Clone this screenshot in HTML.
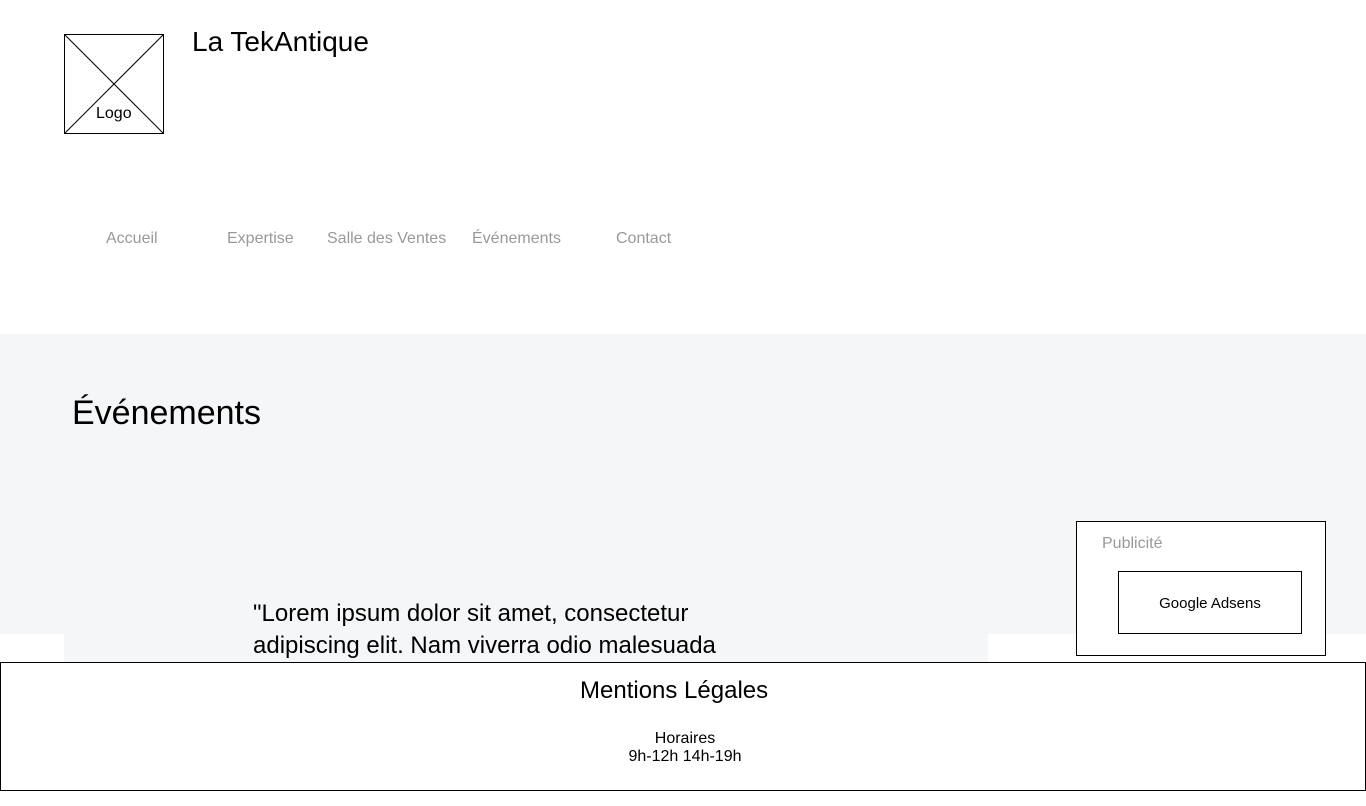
<!DOCTYPE html>
<html><head><meta charset="utf-8"><style>
body{margin:0;width:1366px;height:806px;position:relative;background:#fff;font-family:"Liberation Sans",Arial,sans-serif;overflow:hidden}
.a{position:absolute;white-space:nowrap}
.nav{color:#999;font-size:16px;top:230px}
</style></head><body>
<svg class="a" style="left:64px;top:34px" width="100" height="100"><rect x="0.5" y="0.5" width="99" height="99" fill="#fff" stroke="#000"/><line x1="0" y1="0" x2="100" y2="100" stroke="#000"/><line x1="100" y1="0" x2="0" y2="100" stroke="#000"/></svg>
<div class="a" style="left:96px;top:105px;font-size:16px">Logo</div>
<div class="a" style="left:192px;top:26px;font-size:28px">La TekAntique</div>
<div class="a nav" style="left:106px">Accueil</div>
<div class="a nav" style="left:227px">Expertise</div>
<div class="a nav" style="left:327px">Salle des Ventes</div>
<div class="a nav" style="left:472px">Événements</div>
<div class="a nav" style="left:616px">Contact</div>
<div class="a" style="left:0;top:334px;width:1366px;height:300px;background:#f5f6f8"></div>
<div class="a" style="left:64px;top:634px;width:924px;height:28px;background:#f5f6f8"></div>
<div class="a" style="left:72px;top:394px;font-size:34px">Événements</div>
<div class="a" style="left:253px;top:598px;font-size:24px;line-height:32px">"Lorem ipsum dolor sit amet, consectetur<br>adipiscing elit. Nam viverra odio malesuada</div>
<div class="a" style="left:1076px;top:521px;width:248px;height:133px;border:1px solid #000;background:#fff"></div>
<div class="a" style="left:1102px;top:535px;font-size:16px;color:#999">Publicité</div>
<div class="a" style="left:1118px;top:571px;width:182px;height:61px;border:1px solid #000;text-align:center;line-height:63px;font-size:15px">Google Adsens</div>
<div class="a" style="left:0;top:662px;width:1364px;height:127px;border:1px solid #000;background:#fff"></div>
<div class="a" style="left:580px;top:677px;font-size:24px">Mentions Légales</div>
<div class="a" style="left:585px;top:730px;width:200px;text-align:center;font-size:16px;line-height:18px">Horaires<br>9h-12h 14h-19h</div>
</body></html>
